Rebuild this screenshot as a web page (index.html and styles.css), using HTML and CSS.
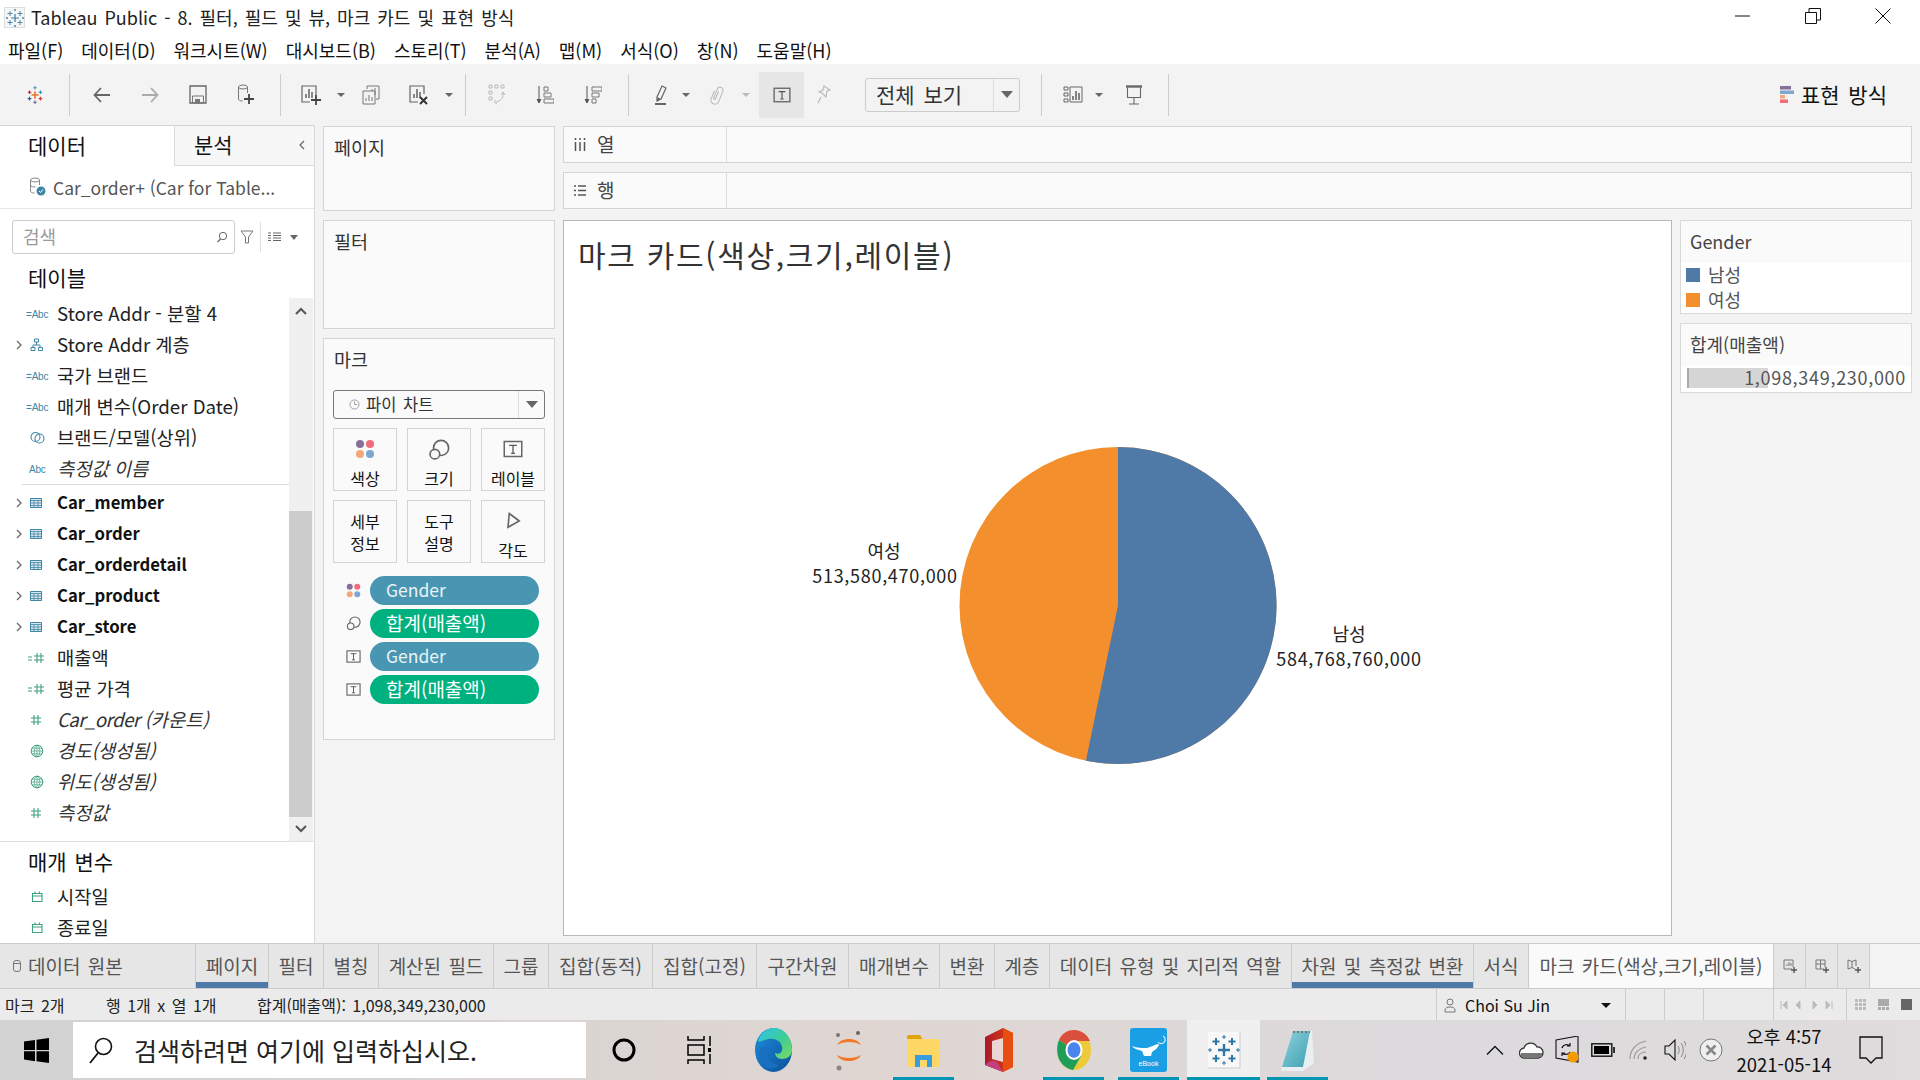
FILE: index.html
```html
<!DOCTYPE html>
<html lang="ko">
<head>
<meta charset="utf-8">
<title>Tableau Public</title>
<link rel="stylesheet" href="styles.css">
</head>
<body>
<svg class="defs" width="0" height="0">
  <defs>
    <symbol id="pills-t" viewBox="0 0 16 16"><rect x="1" y="2" width="14" height="12" fill="none" stroke="#666" stroke-width="1.2"/><path d="M5 5h6M8 5v6.500M6.500 11.500h3" fill="none" stroke="#555"/></symbol>
    <symbol id="size" viewBox="0 0 16 16"><circle cx="9.500" cy="6.500" r="5.500" fill="none" stroke="#666" stroke-width="1.200"/><circle cx="5" cy="11" r="3.500" fill="#fafafa" stroke="#666" stroke-width="1.200"/></symbol>
    <symbol id="dots" viewBox="0 0 16 16"><circle cx="4" cy="4" r="3.200" fill="#85709a"/><circle cx="12" cy="4" r="3.200" fill="#f26b7a"/><circle cx="4" cy="12" r="3.200" fill="#f4a77a"/><circle cx="12" cy="12" r="3.200" fill="#7fa6cf"/></symbol>
    <symbol id="table" viewBox="0 0 12 10"><path d="M.5.500h11v9H.5z" fill="#d8e6ee" stroke="#3f86a6"/><path d="M.5 2.500h11M.5 5h11M.5 7.500h11M4 2.500v7M8 2.500v7" stroke="#3f86a6" fill="none" stroke-width=".8"/></symbol>
    <symbol id="chev" viewBox="0 0 8 12"><path d="M2 2l4 4-4 4" fill="none" stroke="#666" stroke-width="1.300"/></symbol>
    <symbol id="globe" viewBox="0 0 14 14"><circle cx="7" cy="7" r="5.800" fill="none" stroke="#3ea07c" stroke-width="1"/><path d="M1 7h12M1.800 4.200h10.400M1.800 9.800h10.400M7 1v12" stroke="#3ea07c" fill="none" stroke-width=".7"/><ellipse cx="7" cy="7" rx="2.800" ry="5.800" fill="none" stroke="#3ea07c" stroke-width=".7"/></symbol>
    <symbol id="cal" viewBox="0 0 14 14"><path d="M2.500 3.500h9.500v8H2.500zM2.500 6h9.500M5 1.500v2M9.500 1.500v2" fill="none" stroke="#3ea07c" stroke-width="1.100"/></symbol>
    <symbol id="hash" viewBox="0 0 12 12"><path d="M4 1v10M8 1v10M1 4h10M1 8h10" fill="none" stroke="#3ea07c" stroke-width="1.100"/></symbol>
    <symbol id="hashcalc" viewBox="0 0 18 12"><path d="M1 5h4M1 8h4" stroke="#3ea07c" fill="none"/><path d="M10 1v10M14 1v10M7 4h10M7 8h10" fill="none" stroke="#3ea07c" stroke-width="1.100"/></symbol>
    <symbol id="tabadd" viewBox="0 0 16 16"><path d="M10 11H2V2h9v7" fill="none" stroke="#777"/><path d="M5 8V6M7 8V4M9 8V5" stroke="#777"/><path d="M12 9v6M9 12h6" stroke="#555" stroke-width="1.400"/></symbol>
  </defs>
</svg>

<header class="titlebar">
  <svg class="app-icon" viewBox="0 0 22 22">
    <rect x=".5" y=".5" width="20" height="20" fill="#f6f6f6" stroke="#ddd"/>
    <path d="M11 7v8M7 11h8" stroke="#3c7ea6" stroke-width="1.200" fill="none"/>
    <path d="M6 4v5M3.500 6.500h5M16 4v5M13.500 6.500h5M6 13v5M3.500 15.500h5M16 13v5M13.500 15.500h5M11 2v2M10 3h2M11 18v2M10 19h2M2 11h2M3 10v2M18 11h2M19 10v2" stroke="#3c7ea6" stroke-width=".9" fill="none"/>
  </svg>
  <span class="title-text">Tableau Public - 8. 필터, 필드 및 뷰, 마크 카드 및 표현 방식</span>
  <div class="winctl">
    <svg viewBox="0 0 16 16"><path d="M0 8h15" stroke="#111" fill="none"/></svg>
    <svg viewBox="0 0 16 16"><path d="M.5 4.500h11v11H.5zM4 4V.5h11.500V12H12" stroke="#111" fill="none"/></svg>
    <svg viewBox="0 0 16 16"><path d="M.5.500l15 15M15.500.500l-15 15" stroke="#111" fill="none"/></svg>
  </div>
</header>

<nav class="menubar">
  <span>파일(F)</span><span>데이터(D)</span><span>워크시트(W)</span><span>대시보드(B)</span><span>스토리(T)</span><span>분석(A)</span><span>맵(M)</span><span>서식(O)</span><span>창(N)</span><span>도움말(H)</span>
</nav>

<div class="toolbar">
  <div class="tb first">
    <svg width="20" height="20" viewBox="0 0 22 22">
      <path d="M11 7v8M7 11h8" stroke="#e8762c" stroke-width="1.800" fill="none"/>
      <path d="M11 1v4M9 3h4" stroke="#5b9bb5" stroke-width="1.300" fill="none"/>
      <path d="M11 17v4M9 19h4" stroke="#7a6a9a" stroke-width="1.300" fill="none"/>
      <path d="M5 6v4M3 8h4" stroke="#c72035" stroke-width="1.300" fill="none"/>
      <path d="M17 6v4M15 8h4" stroke="#2d8fa8" stroke-width="1.300" fill="none"/>
      <path d="M5 13v4M3 15h4" stroke="#2a5d8f" stroke-width="1.300" fill="none"/>
      <path d="M17 13v4M15 15h4" stroke="#d0353f" stroke-width="1.300" fill="none"/>
    </svg>
  </div>
  <i class="sep s1"></i>
  <div class="tb"><svg width="20" height="18" viewBox="0 0 20 18"><path d="M18 9H3M9 2L2.500 9 9 16" fill="none" stroke="#666" stroke-width="1.800"/></svg></div>
  <div class="tb"><svg width="20" height="18" viewBox="0 0 20 18"><path d="M2 9h15M11 2l6.500 7L11 16" fill="none" stroke="#aaa" stroke-width="1.800"/></svg></div>
  <div class="tb"><svg width="18" height="19" viewBox="0 0 18 19"><path d="M1 1h16v17H1z" fill="none" stroke="#666" stroke-width="1.300"/><path d="M3.500 11h11v7h-11z" fill="none" stroke="#777"/><path d="M6 14h5v4H6z" fill="#777"/></svg></div>
  <div class="tb"><svg width="18" height="22" viewBox="0 0 18 22"><ellipse cx="6" cy="3" rx="4.500" ry="2" fill="none" stroke="#777"/><path d="M1.500 3v12c0 1 1 2 4 2M10.500 3v6" fill="none" stroke="#777"/><path d="M12 10v10M7 15h10" stroke="#444" stroke-width="1.800"/></svg></div>
  <i class="sep s2"></i>
  <div class="tb"><svg width="20" height="22" viewBox="0 0 20 22"><path d="M15 11V2H1v16h8" fill="none" stroke="#666" stroke-width="1.200"/><path d="M5 14v-4M8 14V5M11 14V8" stroke="#666" stroke-width="1.500"/><path d="M15 11v10M10 16h10" stroke="#444" stroke-width="1.800"/></svg></div>
  <div class="dd"></div>
  <div class="tb"><svg width="18" height="20" viewBox="0 0 18 20"><path d="M5 4V1h12v13h-3" fill="none" stroke="#777"/><path d="M1 6h12v13H1z" fill="#f3f3f3" stroke="#777"/><path d="M4 16v-3M7 16v-6M10 16v-4M10 6V4M13 10V3" stroke="#777"/></svg></div>
  <div class="tb"><svg width="20" height="22" viewBox="0 0 20 22"><path d="M15 10V2H1v16h8" fill="none" stroke="#666" stroke-width="1.200"/><path d="M5 14v-4M8 14V5M11 14V8" stroke="#666" stroke-width="1.500"/><path d="M11 13l7 7M18 13l-7 7" stroke="#333" stroke-width="2"/></svg></div>
  <div class="dd"></div>
  <i class="sep s3"></i>
  <div class="tb"><svg width="18" height="22" viewBox="0 0 18 22"><path d="M1 1h3v3H1zM7 1h3v3H7zM13 1h3v3h-3zM1 7h3v3H1zM1 13h3v3H1z" fill="none" stroke="#bbb"/><path d="M15 8c1 5-2 9-7 10M8 16l-2 2 3 2M13 11l2-3 2 3" fill="none" stroke="#bbb"/></svg></div>
  <div class="tb"><svg width="18" height="20" viewBox="0 0 18 20"><path d="M3 1v16M1 14l2 4 2-4" fill="#555" stroke="#555"/><path d="M8 2h4v4H8zM8 8h7v4H8zM8 14h10v4H8z" fill="none" stroke="#777"/></svg></div>
  <div class="tb"><svg width="18" height="20" viewBox="0 0 18 20"><path d="M3 1v16M1 14l2 4 2-4" fill="#555" stroke="#555"/><path d="M8 2h10v4H8zM8 8h7v4H8zM8 14h4v4H8z" fill="none" stroke="#777"/></svg></div>
  <i class="sep s4"></i>
  <div class="tbs"><svg width="14" height="22" viewBox="0 0 14 22"><path d="M3 13L8 2l4 2-5 11-4 2z" fill="none" stroke="#666" stroke-width="1.200"/><path d="M3 13l4 2-4 2z" fill="#666"/><path d="M1 20h11" stroke="#666" stroke-width="2"/></svg></div>
  <div class="dd narrow"></div>
  <div class="tbs clip"><svg width="14" height="20" viewBox="0 0 14 20"><path transform="rotate(22 7 10)" d="M3 7v8.500a4 4 0 008 0V4.500a3 3 0 00-6 0V14a1 1 0 002 0V6" fill="none" stroke="#bbb" stroke-width="1.100"/></svg></div>
  <div class="dd narrow pale"></div>
  <div class="tactive"><svg width="18" height="18" viewBox="0 0 16 16"><use href="#pills-t"/></svg></div>
  <div class="tbs"><svg width="14" height="20" viewBox="0 0 14 20"><path d="M7 1l6 4-3 1-1 6-4-4-3-1 4-2zM4 12l-3 6" fill="none" stroke="#bbb" stroke-width="1.200"/></svg></div>
  <div class="fit">
    <span class="fit-label">전체 보기</span>
    <span class="fit-arrow"><b></b></span>
  </div>
  <i class="sep s5"></i>
  <div class="tb showme-i"><svg width="20" height="18" viewBox="0 0 20 18"><path d="M1 1h4v3H1zM1 7h4v3H1zM1 13h4v3H1zM7 1h12v15H7z" fill="none" stroke="#666"/><path d="M10 14v-4M13 14V5M16 14V7" stroke="#666" stroke-width="1.600"/></svg></div>
  <div class="dd narrow"></div>
  <div class="tb pres"><svg width="18" height="20" viewBox="0 0 18 20"><path d="M1 1.500h16" stroke="#666" stroke-width="2.400"/><path d="M2.500 2.500v10h13v-10M9 12.500V19M4 19h10" fill="none" stroke="#666" stroke-width="1.100"/></svg></div>
  <i class="sep s6"></i>
  <div class="showme">
    <svg width="14" height="18" viewBox="0 0 14 18"><rect y="0" width="11" height="3.500" fill="#85709a"/><rect y="4.500" width="14" height="3.500" fill="#7fa6cf"/><rect y="9" width="5" height="3.500" fill="#f4a77a"/><rect y="13.500" width="8" height="3.500" fill="#f26b7a"/></svg>
    <span>표현 방식</span>
  </div>
</div>

<main class="workspace">
  <aside class="datapane">
    <div class="dtabs">
      <div class="dtab on">데이터</div>
      <div class="dtab off">분석<svg width="8" height="12" viewBox="0 0 8 12"><path d="M6 2L2 6l4 4" fill="none" stroke="#666" stroke-width="1.200"/></svg></div>
    </div>
    <div class="source">
      <svg width="17" height="20" viewBox="0 0 17 20"><ellipse cx="6" cy="3" rx="4.500" ry="2" fill="none" stroke="#888"/><path d="M1.500 3v11c0 1 1 2 4 2M10.500 3v5M1.500 8c0 1.500 3 2 5 2" fill="none" stroke="#888"/><circle cx="12" cy="14" r="4.500" fill="#3f86a6"/><path d="M10 14l1.500 1.500L14 12.500" stroke="#fff" fill="none"/></svg>
      <span>Car_order+ (Car for Table...</span>
    </div>
    <div class="searchrow">
      <div class="search"><span>검색</span><svg width="12" height="12" viewBox="0 0 12 12"><circle cx="7" cy="5" r="3.700" fill="none" stroke="#666"/><path d="M4.500 8L1.500 11" stroke="#666" stroke-width="1.200"/></svg></div>
      <svg class="funnel" width="14" height="14" viewBox="0 0 14 14"><path d="M1 1h12L8.500 7v6h-3V7z" fill="none" stroke="#777"/></svg>
      <i class="vline"></i>
      <svg class="listview" width="13" height="10" viewBox="0 0 13 10"><path d="M0 1h3M5 1h8M0 3.500h3M5 3.500h8M0 6h3M5 6h8M0 8.500h3M5 8.500h8" stroke="#666"/></svg>
      <i class="caret small"></i>
    </div>
    <h2 class="sect">테이블</h2>
    <div class="listwrap">
      <div class="fields">
        <div class="row"><span class="ico abc">=Abc</span><span>Store Addr - 분할 4</span></div>
        <div class="row"><svg class="chv" viewBox="0 0 8 12"><use href="#chev"/></svg><svg class="ico svgi" width="14" height="14" viewBox="0 0 14 14"><path d="M4.500 1h4v3h-4zM1 9.500h4v3H1zM8.500 9.500h4v3h-4zM6.500 4v3M3 9.500V7h7v2.500" fill="none" stroke="#3f86a6"/></svg><span>Store Addr 계층</span></div>
        <div class="row"><span class="ico abc">=Abc</span><span>국가 브랜드</span></div>
        <div class="row"><span class="ico abc">=Abc</span><span>매개 변수(Order Date)</span></div>
        <div class="row"><svg class="ico svgi" width="15" height="14" viewBox="0 0 15 14"><circle cx="5.500" cy="6" r="4.500" fill="none" stroke="#3f86a6" stroke-width="1.100"/><circle cx="9.500" cy="7.500" r="4.500" fill="none" stroke="#3f86a6" stroke-width="1.100"/></svg><span>브랜드/모델(상위)</span></div>
        <div class="row it"><span class="ico abc plain">Abc</span><span>측정값 이름</span></div>
        <hr class="rule">
        <div class="row bold"><svg class="chv" viewBox="0 0 8 12"><use href="#chev"/></svg><svg class="ico svgi" width="12" height="10"><use href="#table"/></svg><span>Car_member</span></div>
        <div class="row bold"><svg class="chv" viewBox="0 0 8 12"><use href="#chev"/></svg><svg class="ico svgi" width="12" height="10"><use href="#table"/></svg><span>Car_order</span></div>
        <div class="row bold"><svg class="chv" viewBox="0 0 8 12"><use href="#chev"/></svg><svg class="ico svgi" width="12" height="10"><use href="#table"/></svg><span>Car_orderdetail</span></div>
        <div class="row bold"><svg class="chv" viewBox="0 0 8 12"><use href="#chev"/></svg><svg class="ico svgi" width="12" height="10"><use href="#table"/></svg><span>Car_product</span></div>
        <div class="row bold"><svg class="chv" viewBox="0 0 8 12"><use href="#chev"/></svg><svg class="ico svgi" width="12" height="10"><use href="#table"/></svg><span>Car_store</span></div>
        <div class="row"><svg class="ico svgi hc" width="18" height="12"><use href="#hashcalc"/></svg><span>매출액</span></div>
        <div class="row"><svg class="ico svgi hc" width="18" height="12"><use href="#hashcalc"/></svg><span>평균 가격</span></div>
        <div class="row it"><svg class="ico svgi" width="12" height="12"><use href="#hash"/></svg><span><span class="tight">Car_order</span> (카운트)</span></div>
        <div class="row it"><svg class="ico svgi" width="14" height="14"><use href="#globe"/></svg><span>경도(생성됨)</span></div>
        <div class="row it"><svg class="ico svgi" width="14" height="14"><use href="#globe"/></svg><span>위도(생성됨)</span></div>
        <div class="row it"><svg class="ico svgi" width="12" height="12"><use href="#hash"/></svg><span>측정값</span></div>
      </div>
      <div class="vscroll">
        <span class="sbtn"><svg width="12" height="8" viewBox="0 0 12 8"><path d="M1 7l5-5 5 5" fill="none" stroke="#555" stroke-width="2"/></svg></span>
        <span class="strack"></span>
        <span class="sthumb"></span>
        <span class="sbtn"><svg width="12" height="8" viewBox="0 0 12 8"><path d="M1 1l5 5 5-5" fill="none" stroke="#555" stroke-width="2"/></svg></span>
      </div>
    </div>
    <div class="params">
      <h2 class="sect">매개 변수</h2>
      <div class="row"><svg class="ico svgi" width="14" height="14"><use href="#cal"/></svg><span>시작일</span></div>
      <div class="row"><svg class="ico svgi" width="14" height="14"><use href="#cal"/></svg><span>종료일</span></div>
    </div>
  </aside>

  <section class="cards">
    <div class="card pages"><h3>페이지</h3></div>
    <div class="card filters"><h3>필터</h3></div>
    <div class="card marks">
      <h3>마크</h3>
      <div class="marktype">
        <span class="mt-label"><svg width="11" height="11" viewBox="0 0 12 12"><circle cx="6" cy="6" r="5" fill="none" stroke="#999"/><path d="M6 6V2.500M6 6h3" stroke="#999"/></svg>파이 차트</span>
        <span class="mt-arrow"><b></b></span>
      </div>
      <div class="markbtns">
        <div class="mbtn"><svg width="20" height="20" viewBox="0 0 16 16"><use href="#dots"/></svg><span>색상</span></div>
        <div class="mbtn"><svg width="22" height="22" viewBox="0 0 16 16"><use href="#size"/></svg><span>크기</span></div>
        <div class="mbtn"><svg width="22" height="20" viewBox="0 0 16 16"><use href="#pills-t"/></svg><span>레이블</span></div>
        <div class="mbtn two"><span>세부<br>정보</span></div>
        <div class="mbtn two"><span>도구<br>설명</span></div>
        <div class="mbtn"><svg width="18" height="20" viewBox="0 0 14 16"><path d="M4 2l8 6-9 5z" fill="none" stroke="#666" stroke-width="1.300"/></svg><span>각도</span></div>
      </div>
      <div class="pillrows">
        <div class="pillrow"><svg width="15" height="15" viewBox="0 0 16 16"><use href="#dots"/></svg><span class="pill dim">Gender</span></div>
        <div class="pillrow"><svg width="15" height="15" viewBox="0 0 16 16"><use href="#size"/></svg><span class="pill mea">합계(매출액)</span></div>
        <div class="pillrow"><svg width="15" height="15" viewBox="0 0 16 16"><use href="#pills-t"/></svg><span class="pill dim">Gender</span></div>
        <div class="pillrow"><svg width="15" height="15" viewBox="0 0 16 16"><use href="#pills-t"/></svg><span class="pill mea">합계(매출액)</span></div>
      </div>
    </div>
  </section>

  <section class="canvas">
    <div class="shelf"><div class="shelf-label"><svg width="12" height="13" viewBox="0 0 12 13"><path d="M1.500 0v2M6 0v2M10.500 0v2M1.500 4v9M6 4v9M10.500 4v9" stroke="#555" stroke-width="1.500" fill="none"/></svg><span>열</span></div><div class="shelf-body"></div></div>
    <div class="shelf"><div class="shelf-label"><svg width="12" height="13" viewBox="0 0 12 13"><path d="M0 2h2M4 2h8M0 6.500h2M4 6.500h8M0 11h2M4 11h8" stroke="#555" stroke-width="1.500" fill="none"/></svg><span>행</span></div><div class="shelf-body"></div></div>
    <div class="viewrow">
      <div class="view">
        <div class="view-title">마크 카드(색상,크기,레이블)</div>
        <svg class="chart" viewBox="564 281 1107 654">
          <circle cx="1118" cy="605.500" r="158.500" fill="#f48f2d"/>
          <path d="M1118 605.500V447A158.500 158.500 0 1 1 1085.900 760.700Z" fill="#4f79a7"/>
          <text class="lbl" x="884" y="558">여성</text>
          <text class="lbl val" x="885" y="583">513,580,470,000</text>
          <text class="lbl" x="1349" y="641">남성</text>
          <text class="lbl val" x="1349" y="666">584,768,760,000</text>
        </svg>
      </div>
      <div class="legends">
        <div class="legend">
          <div class="leg-head">Gender</div>
          <div class="leg-item"><i class="sw blue"></i>남성</div>
          <div class="leg-item"><i class="sw orange"></i>여성</div>
        </div>
        <div class="legend">
          <div class="leg-head">합계(매출액)</div>
          <div class="leg-range"><i class="rangebar"></i><span>1,098,349,230,000</span></div>
        </div>
      </div>
    </div>
  </section>
</main>

<div class="tabs">
  <div class="tab src"><svg width="8" height="12" viewBox="0 0 8 12"><rect x=".5" y=".5" width="7" height="11" rx="2.500" fill="none" stroke="#777"/><path d="M.5 3.500h7" stroke="#777"/></svg>데이터 원본</div>
  <div class="tab act">페이지</div>
  <div class="tab">필터</div>
  <div class="tab">별칭</div>
  <div class="tab">계산된 필드</div>
  <div class="tab">그룹</div>
  <div class="tab">집합(동적)</div>
  <div class="tab">집합(고정)</div>
  <div class="tab">구간차원</div>
  <div class="tab">매개변수</div>
  <div class="tab">변환</div>
  <div class="tab">계층</div>
  <div class="tab">데이터 유형 및 지리적 역할</div>
  <div class="tab act">차원 및 측정값 변환</div>
  <div class="tab">서식</div>
  <div class="tab cur">마크 카드(색상,크기,레이블)</div>
  <div class="tab"><svg width="16" height="16"><use href="#tabadd"/></svg></div>
  <div class="tab"><svg width="16" height="16" viewBox="0 0 16 16"><path d="M10 11H2V2h9v7M2 6h9M6.500 2v9" fill="none" stroke="#777"/><path d="M12 9v6M9 12h6" stroke="#555" stroke-width="1.400"/></svg></div>
  <div class="tab"><svg width="16" height="16" viewBox="0 0 16 16"><path d="M9 11l-3-1.500L2 11V2l4 1.500L10 2v6M6 3.500v6" fill="none" stroke="#777"/><path d="M12 9v6M9 12h6" stroke="#555" stroke-width="1.400"/></svg></div>
  <div class="tab blank"></div>
</div>

<div class="status">
  <div class="st-left"><span>마크 2개</span><span>행 1개 x 열 1개</span><span>합계(매출액): 1,098,349,230,000</span></div>
  <div class="st-cell st-user">
    <svg width="12" height="15" viewBox="0 0 12 15"><circle cx="6" cy="4" r="3" fill="none" stroke="#777"/><path d="M1 14v-2c0-2 2-3 5-3s5 1 5 3v2z" fill="none" stroke="#777"/></svg>
    <span>Choi Su Jin</span><i class="caret black"></i>
  </div>
  <div class="st-cell"></div>
  <div class="st-cell"></div>
  <div class="st-cell"></div>
  <div class="st-cell st-nav">
    <svg width="60" height="10" viewBox="0 0 60 10"><path d="M1 1v8M7 1L3 5l4 4zM20 1l-4 4 4 4zM33 1l4 4-4 4zM46 1l4 4-4 4zM52 1v8" fill="#bbb" stroke="#bbb"/></svg>
  </div>
  <div class="st-cell st-size">
    <svg width="11" height="11" viewBox="0 0 11 11"><path d="M0 0h3v3H0zM4 0h3v3H4zM8 0h3v3H8zM0 4h3v3H0zM4 4h3v3H4zM8 4h3v3H8zM0 8h3v3H0zM4 8h3v3H4zM8 8h3v3H8z" fill="#bbb"/></svg>
    <svg width="11" height="11" viewBox="0 0 11 11"><path d="M0 0h11v7H0zM0 8h3v3H0zM4 8h3v3H4zM8 8h3v3H8z" fill="#aaa"/></svg>
    <svg width="11" height="11" viewBox="0 0 11 11"><path d="M0 0h11v11H0z" fill="#666"/></svg>
  </div>
</div>

<footer class="taskbar">
  <div class="start"><svg width="25" height="25" viewBox="0 0 25 25"><path d="M0 3.500l11-1.500v10H0zM12.500 1.800L25 0v12H12.500zM0 13.200h11v10L0 21.600zM12.500 13.200H25V25l-12.500-1.800z" fill="#000"/></svg></div>
  <div class="tsearch">
    <svg width="25" height="29" viewBox="0 0 25 29"><circle cx="14.500" cy="10.500" r="8" fill="none" stroke="#111" stroke-width="1.600"/><path d="M9 17L1 27" stroke="#111" stroke-width="1.800"/></svg>
    <span>검색하려면 여기에 입력하십시오.</span>
  </div>
  <div class="ti"><svg width="24" height="24" viewBox="0 0 24 24"><circle cx="12" cy="12" r="10" fill="none" stroke="#000" stroke-width="3"/></svg></div>
  <div class="ti"><svg width="24" height="28" viewBox="0 0 24 28"><path d="M1 0v4h16V0M1 9h16v10H1zM1 28v-4h16v4M23 0v10M23 18v10" fill="none" stroke="#000" stroke-width="1.500"/><rect x="21" y="12" width="4" height="4" fill="#000"/></svg></div>
  <div class="ti"><svg width="37" height="44" viewBox="0 0 37 44">
    <defs>
      <linearGradient id="e1" x1="0" y1="0" x2="1" y2="1"><stop offset="0" stop-color="#2fc6e8"/><stop offset=".5" stop-color="#3bcb9b"/><stop offset="1" stop-color="#7ddb5e"/></linearGradient>
      <linearGradient id="e2" x1="0" y1="0" x2="1" y2="1"><stop offset="0" stop-color="#1c8ed8"/><stop offset="1" stop-color="#0c4f9c"/></linearGradient>
    </defs>
    <ellipse cx="18.500" cy="22" rx="18.500" ry="22" fill="url(#e2)"/>
    <path d="M3 13C6 4 13 0 19 0c10 0 18 9 18 22 0 6-5 9-10 9-4 0-7-3-7-6 5 2 8-1 7-6C26 13 20 10 13 11 8 12 4 15 3 13z" fill="url(#e1)"/>
    <path d="M14 22c-3 6 0 14 10 15-2 3-10 5-15 1C4 33 2 24 8 19c3-2 6-1 6 3z" fill="#1a6fc0"/>
  </svg></div>
  <div class="ti"><svg width="30" height="44" viewBox="0 0 30 44"><path d="M3 17C7 9 23 9 27 17 21 13 9 13 3 17zM3 27C7 35 23 35 27 27 21 31 9 31 3 27z" fill="#f37726"/><circle cx="4" cy="7" r="2" fill="#777"/><circle cx="24" cy="5" r="2" fill="#666"/><circle cx="5" cy="40" r="2.500" fill="#888"/></svg></div>
  <div class="ti on"><svg width="33" height="33" viewBox="0 0 33 33"><path d="M0 3a2 2 0 012-2h11l3 5H0z" fill="#e0a30c"/><path d="M0 5h31a2 2 0 012 2v24a2 2 0 01-2 2H2a2 2 0 01-2-2z" fill="#ffd766"/><path d="M8 33V21h17v12h-5v-7h-7v7z" fill="#3a9ce0"/></svg></div>
  <div class="ti"><svg width="28" height="44" viewBox="0 0 28 44"><defs><linearGradient id="o1" x1="0" y1="0" x2="1" y2="0"><stop offset="0" stop-color="#a8192b"/><stop offset="1" stop-color="#e2420f"/></linearGradient></defs><path d="M0 9L18 0l10 5v34l-10 5L0 37z" fill="url(#o1)"/><path d="M18 0v44l10-5V5z" fill="#e84e10"/><path d="M7 13l11-3v24L7 31z" fill="#f3f3f3" opacity=".85"/><path d="M0 37c3-3 7-6 12-3l6 10z" fill="#c43f82"/></svg></div>
  <div class="ti on"><svg width="34" height="40" viewBox="0 0 34 40"><ellipse cx="17" cy="20" rx="17" ry="20" fill="#eccb3a"/><path d="M17 20L2 10C5 3 11 0 17 0c7 0 13 4 16 11H17z" fill="#db4f3f"/><path d="M17 20L2 10C-1 17 0 26 3 31c3 5 8 8 13 9l8-14z" fill="#1e9e58"/><ellipse cx="17" cy="20" rx="8.500" ry="10" fill="#fff"/><ellipse cx="17" cy="20" rx="6.500" ry="7.700" fill="#4a85ee"/></svg></div>
  <div class="ti on"><svg width="37" height="44" viewBox="0 0 37 44"><rect width="37" height="44" rx="3" fill="#1b9fe4"/><path d="M2 18c5 2 9 2 15 2 4-1 9-4 12-4 0 3-4 6-7 8l-1 4h-7l-2-5c-3-1-8-2-10-5z" fill="#fff"/><path d="M28 14a4 4 0 105-6" fill="none" stroke="#d6eefa" stroke-width="1.200"/><text x="18.500" y="38" text-anchor="middle" class="ebook">eBook</text></svg></div>
  <div class="ti act"><svg width="34" height="38" viewBox="0 0 34 38"><rect x="1" y="1" width="32" height="36" fill="#f8f8f8"/><path d="M1 37h32V1" fill="none" stroke="#ccc"/><path d="M17 13v12M11 19h12" stroke="#2f77a3" stroke-width="2.400" fill="none"/><path d="M9 7v7M5.500 10.500h7M25 7v7M21.500 10.500h7M9 24v7M5.500 27.500h7M25 24v7M21.500 27.500h7" stroke="#2f77a3" stroke-width="2" fill="none"/><path d="M17 4v4M15 6h4M17 30v4M15 32h4M3 17v4M1 19h4M31 17v4M29 19h4" stroke="#2f77a3" fill="none"/></svg></div>
  <div class="ti on"><svg width="33" height="42" viewBox="0 0 33 42"><defs><linearGradient id="n1" x1="0" y1="0" x2="1" y2="1"><stop offset="0" stop-color="#8fd3de"/><stop offset="1" stop-color="#3f9fb2"/></linearGradient></defs><path d="M12 2h19l2 32-11 8H0z" fill="#e9eff1"/><path d="M12 2h17l-7 36H1z" fill="url(#n1)"/><path d="M12 3h17" stroke="#777" stroke-width="2" stroke-dasharray="2 2"/></svg></div>
  <div class="tray">
    <div class="tr"><svg width="18" height="10" viewBox="0 0 18 10"><path d="M1 9.500l8-8 8 8" fill="none" stroke="#111" stroke-width="1.300"/></svg></div>
    <div class="tr"><svg width="25" height="18" viewBox="0 0 25 18"><path d="M6 17a5 5 0 01-1-10 7 7 0 0113-1 5.500 5.500 0 011 11z" fill="#fafafa" stroke="#333" stroke-width="1.300"/><path d="M2 12h21v3l-4 2H5l-3-2z" fill="#777"/></svg></div>
    <div class="tr"><svg width="24" height="28" viewBox="0 0 24 28"><path d="M1 4l22-4v26L1 22z" fill="none" stroke="#111" stroke-width="1.100"/><path d="M7 12c1-4 6-4 8-2M15 7v3h-3M15 16c-1 3-6 3-8 1M7 20v-3h3" fill="none" stroke="#111" stroke-width="1.200"/><circle cx="18" cy="21" r="5.500" fill="#f59a00"/></svg></div>
    <div class="tr"><svg width="24" height="14" viewBox="0 0 24 14"><rect x=".8" y=".8" width="20" height="12.400" fill="none" stroke="#111" stroke-width="1.400"/><rect x="3" y="3" width="15" height="8" fill="#000"/><rect x="22" y="4" width="2" height="6" fill="#333"/></svg></div>
    <div class="tr"><svg width="20" height="20" viewBox="0 0 20 20"><path d="M1 19C1 9 8 3 17 1M5 19c0-6 5-11 12-12M9 19c0-4 3-7 8-7" fill="none" stroke="#999" stroke-width="1.100"/><circle cx="16" cy="18" r="1.800" fill="#222"/></svg></div>
    <div class="tr"><svg width="22" height="24" viewBox="0 0 22 24"><path d="M1 8h4l6-6v20l-6-6H1z" fill="none" stroke="#111" stroke-width="1.100"/><path d="M14 8c1.500 2 1.500 6 0 8M17 5c3 4 3 10 0 14M20 3c3.500 5 3.500 13 0 18" fill="none" stroke="#888" stroke-width="1"/></svg></div>
    <div class="tr"><svg width="24" height="24" viewBox="0 0 24 24"><circle cx="12" cy="12" r="11" fill="#eee" stroke="#777"/><path d="M7.500 7.500l9 9M16.500 7.500l-9 9" stroke="#888" stroke-width="2.500"/></svg></div>
    <div class="clock"><span>오후 4:57</span><span>2021-05-14</span></div>
    <div class="notif"><svg width="24" height="28" viewBox="0 0 24 28"><path d="M1 1h22v21h-6l-5 5-5-5H1z" fill="none" stroke="#111" stroke-width="1.300"/></svg></div>
  </div>
</footer>
</body>
</html>
```
FILE: styles.css
```css
* { box-sizing: border-box; }
html, body { margin: 0; padding: 0; }
body {
  width: 1920px;
  height: 1080px;
  overflow: hidden;
  display: flex;
  flex-direction: column;
  background: #f3f3f3;
  color: #222;
  font-family: "Noto Sans CJK KR", "Noto Sans", sans-serif;
  font-size: 18px;
  line-height: 1.2;
}
.defs { position: absolute; }
svg { display: block; flex: none; }
h2, h3 { margin: 0; font-weight: 400; }
i { display: block; font-style: normal; }

/* title + menu */
.titlebar { height: 34px; background: #fff; display: flex; align-items: center; padding: 1px 0 0 4px; flex: none; }
.app-icon { width: 22px; height: 22px; margin-right: 5px; }
.title-text { font-size: 18px; color: #222; word-spacing: 2px; }
.winctl { margin-left: auto; display: flex; gap: 54px; padding: 0 29px 3px 0; }
.winctl svg { width: 16px; height: 16px; }
.menubar { height: 30px; background: #fff; display: flex; align-items: center; gap: 18px; padding: 4px 0 0 8px; flex: none; font-size: 18px; color: #111; }

/* toolbar */
.toolbar { height: 61px; background: #f3f3f3; display: flex; align-items: center; padding-left: 11px; flex: none; }
.tb { width: 48px; height: 46px; display: flex; align-items: center; justify-content: center; }
.tbs { width: 40px; height: 46px; display: flex; align-items: center; justify-content: center; }
.dd { width: 12px; height: 46px; display: flex; align-items: center; justify-content: center; }
.dd::after { content: ""; border: 4px solid transparent; border-top: 4px solid #666; border-bottom: 0; }
.dd.narrow { width: 10px; }
.dd.pale::after { border-top-color: #bbb; }
.clip { margin-left: 6px; }
.dd.pale { margin-left: 4px; margin-right: 8px; }
.sep { width: 1px; height: 42px; background: #ccc; }
.s1 { margin: 0 8px 0 10px; }
.s2 { margin: 0 6px 0 10px; }
.s3 { margin: 0 7px 0 10px; }
.s4 { margin: 0 12px 0 11px; }
.s5 { margin: 0 7px 0 21px; }
.s6 { margin: 0 0 0 10px; }
.showme-i { margin-right: -3px; }
.pres { margin-left: 6px; }
.tactive { width: 45px; height: 46px; background: #e6e6e6; display: flex; align-items: center; justify-content: center; }
.fit { width: 155px; height: 34px; margin-left: 21px; border: 1px solid #ccc; border-radius: 3px; display: flex; align-items: center; background: #f3f3f3; }
.fit-label { flex: 1; padding-left: 10px; font-size: 21px; color: #333; word-spacing: 3px; white-space: nowrap; }
.fit-arrow { width: 26px; height: 100%; border-left: 1px solid #ddd; display: flex; align-items: center; justify-content: center; }
.fit-arrow b, .mt-arrow b { border: 6px solid transparent; border-top: 7px solid #666; border-bottom: 0; }
.showme { margin-left: auto; padding-right: 33px; display: flex; align-items: center; gap: 7px; font-size: 21px; color: #111; word-spacing: 3px; }

/* workspace */
.workspace { flex: 1; min-height: 0; display: grid; grid-template-columns: 315px 232px 1349px; column-gap: 8px; padding-right: 8px; }
.datapane { background: #fff; border-right: 1px solid #d9d9d9; border-top: 1px solid #d4d4d4; display: flex; flex-direction: column; }
.dtabs { display: grid; grid-template-columns: 174px 1fr; height: 40px; flex: none; }
.dtab { display: flex; align-items: center; font-size: 21px; color: #111; padding-bottom: 1px; }
.dtab.on { padding-left: 28px; }
.dtab.off { padding: 0 8px 1px 19px; justify-content: space-between; background: #f7f7f7; border-left: 1px solid #d9d9d9; border-bottom: 1px solid #d9d9d9; }
.source { height: 43px; flex: none; display: flex; align-items: center; gap: 7px; padding: 0 0 0 29px; font-size: 17.500px; color: #555; border-bottom: 1px solid #e6e6e6; }
.searchrow { height: 48px; flex: none; display: flex; align-items: center; padding: 8px 0 0 12px; }
.search { width: 223px; height: 34px; border: 1px solid #ccc; border-radius: 3px; display: flex; align-items: center; justify-content: space-between; padding: 0 6px 0 10px; color: #999; }
.funnel { margin-left: 5px; }
.vline { width: 1px; height: 30px; background: #ddd; margin: 0 7px 0 6px; }
.caret { border: 4px solid transparent; border-top: 5px solid #666; border-bottom: 0; }
.caret.small { margin-left: 9px; }
.caret.black { border-top-color: #111; border-width: 5px 5px 0; margin-left: auto; }
.sect { height: 41px; padding-left: 28px; display: flex; align-items: center; font-size: 21px; color: #111; flex: none; word-spacing: 2px; }
.listwrap { height: 544px; flex: none; display: grid; grid-template-columns: 289px 24px; border-bottom: 1px solid #e0e0e0; }
.row { height: 31px; display: flex; align-items: center; position: relative; padding-left: 57px; color: #222; font-size: 18.700px; white-space: nowrap; }
.rule { height: 1px; border: 0; margin: 0 0 2px 22px; background: #ddd; }
.row .ico { position: absolute; left: 26px; top: 50%; transform: translateY(-50%); }
.row .svgi { left: 30px; }
.row .svgi.hc { left: 27px; }
.abc { font: 10px "Liberation Sans", sans-serif; color: #3f86a6; letter-spacing: -.2px; }
.row .abc.plain { left: 29px; }
.chv { position: absolute; left: 15px; top: 10px; width: 8px; height: 12px; }
.tight { letter-spacing: -.6px; }
.row.it { font-style: italic; color: #333; }
.row.bold { font-weight: 700; color: #111; font-size: 16.700px; }
.vscroll { background: #f0f0f0; display: grid; grid-template-rows: 25px 188px 306px 24px; justify-items: stretch; border-right: 1px solid #f0f0f0; }
.sbtn { display: flex; align-items: center; justify-content: center; }
.sthumb { background: #cccccc; }
.params { flex: 1; }
.params .sect { height: 39px; }
.params .row { height: 31px; }

/* cards */
.cards { display: flex; flex-direction: column; gap: 9px; padding-top: 1px; }
.card { background: #fafafa; border: 1px solid #d4d4d4; padding: 9px 9px; }
.card h3 { font-size: 18.500px; color: #333; padding-left: 1px; }
.pages { height: 85px; }
.filters { height: 109px; }
.marks { height: 402px; }
.marktype { margin-top: 20px; height: 29px; border: 1px solid #777; border-radius: 3px; display: flex; align-items: center; font-size: 16.500px; color: #333; }
.mt-label { flex: 1; display: flex; align-items: center; gap: 6px; padding-left: 15px; word-spacing: 2px; }
.mt-arrow { width: 26px; height: 100%; border-left: 1px solid #ddd; display: flex; align-items: center; justify-content: center; }
.markbtns { margin-top: 9px; display: grid; grid-template-columns: repeat(3, 64px); grid-auto-rows: 63px; column-gap: 10px; row-gap: 9px; }
.mbtn { border: 1px solid #d4d4d4; display: flex; flex-direction: column; align-items: center; justify-content: space-between; padding: 10px 0 1px; font-size: 16px; color: #111; line-height: 22px; text-align: center; }
.mbtn.two { justify-content: center; padding: 0; }
.pillrows { margin-top: 13px; display: flex; flex-direction: column; gap: 4px; padding-left: 13px; }
.pillrow { display: flex; align-items: center; gap: 9px; }
.pill { width: 169px; height: 29px; border-radius: 15px; color: #fff; display: flex; align-items: center; line-height: 1; padding: 0 0 2px 16px; }
.pill.dim { background: #4996b2; color: #e9f3f6; font-size: 17.500px; }
.pill.mea { background: #00b180; font-size: 19px; }

/* canvas */
.canvas { display: flex; flex-direction: column; padding-top: 1px; }
.shelf { height: 37px; margin-bottom: 9px; flex: none; display: grid; grid-template-columns: 163px 1fr; background: #fafafa; border: 1px solid #d4d4d4; }
.shelf-label { display: flex; align-items: center; gap: 11px; padding-left: 10px; border-right: 1px solid #ddd; color: #444; font-size: 19px; }
.viewrow { margin-top: 2px; height: 716px; display: grid; grid-template-columns: 1109px 232px; column-gap: 8px; }
.view { background: #fff; border: 1px solid #b8b8b8; display: grid; grid-template-rows: 60px 654px; }
.view-title { padding: 15px 0 0 14px; font-size: 30px; color: #333; line-height: 1.2; letter-spacing: 1.700px; }
.chart { width: 1107px; height: 654px; }
.lbl { font: 18px "Noto Sans CJK KR", sans-serif; fill: #222; text-anchor: middle; }
.val { letter-spacing: .7px; }
.legends { display: flex; flex-direction: column; gap: 9px; }
.legend { background: #fff; border: 1px solid #d9d9d9; }
.leg-head { height: 42px; background: #fafafa; padding: 0 0 0 9px; display: flex; align-items: center; color: #444; font-size: 18px; }
.leg-item { height: 25px; display: flex; align-items: center; gap: 8px; padding: 0 0 1px 5px; color: #555; font-size: 18px; }
.sw { width: 14px; height: 14px; }
.sw.blue { background: #4f79a7; }
.sw.orange { background: #f48f2d; }
.leg-range { display: grid; height: 26px; }
.rangebar, .leg-range span { grid-area: 1 / 1; }
.rangebar { width: 81px; height: 20px; margin: 2px 0 0 6px; background: #d6d6d6; border-left: 2px solid #aaa; }
.leg-range span { justify-self: end; padding-right: 5px; font-size: 18px; color: #555; line-height: 22px; letter-spacing: .7px; }

/* tabs */
.tabs { height: 46px; flex: none; display: grid; grid-template-columns: 196px 73px 55px 55px 115px 55px 104px 104px 92px 91px 55px 55px 242px 182px 55px 245px 32px 32px 32px 1fr; background: #e6e6e6; border-top: 1px solid #ccc; border-bottom: 1px solid #ccc; }
.tab { display: flex; align-items: center; justify-content: center; border-right: 1px solid #ccc; color: #555; font-size: 19px; white-space: nowrap; word-spacing: 2px; }
.tab.src { justify-content: flex-start; gap: 7px; padding-left: 13px; }
.tab.act { box-shadow: inset 0 -6px 0 #4f79a7; }
.tab.cur { background: #fafafa; }
.tab.blank { border-right: 0; background: #f3f3f3; }

/* status */
.status { height: 31px; flex: none; display: grid; grid-template-columns: 1436px 189px 39px 39px 70px 73px 74px; background: #ebebeb; font-size: 16px; color: #222; }
.st-left { display: flex; align-items: center; padding: 2px 0 0 5px; word-spacing: 2px; }
.st-left span:nth-child(1) { width: 101px; }
.st-left span:nth-child(2) { width: 151px; }
.st-cell { border-left: 1px solid #ccc; display: flex; align-items: center; }
.st-user { gap: 9px; padding: 2px 14px 0 7px; font-size: 16px; color: #111; }
.st-nav { justify-content: center; }
.st-size { justify-content: center; gap: 12px; }

/* taskbar */
.taskbar { height: 60px; flex: none; display: flex; background: linear-gradient(90deg, #d2d2d2 0%, #dfd6d2 45%, #dcdadd 75%, #e0dcdd 100%); }
.start { width: 73px; display: flex; align-items: center; justify-content: center; }
.tsearch { width: 513px; margin: 2px 0; background: #fff; display: flex; align-items: center; gap: 20px; padding-left: 16px; font-size: 25px; color: #222; white-space: nowrap; }
.ti { width: 75px; flex: none; display: flex; align-items: center; justify-content: center; }
.ti.on { background: linear-gradient(#0095b3, #0095b3) center bottom / 61px 3px no-repeat; }
.ti.act { width: 73px; margin: 0 0 0 1px; background: #f1f0f0; box-shadow: inset 0 -3px 0 #0095b3; }
.ebook { font: 7px "Liberation Sans", sans-serif; fill: #fff; }
.tray { margin-left: auto; display: flex; align-items: center; }
.tr { width: 36px; display: flex; justify-content: center; }
.clock { width: 86px; display: flex; flex-direction: column; align-items: center; font-size: 18.500px; color: #111; gap: 5px; white-space: nowrap; margin-left: 12px; }
.notif { width: 93px; display: flex; justify-content: center; padding-right: 6px; }
```
